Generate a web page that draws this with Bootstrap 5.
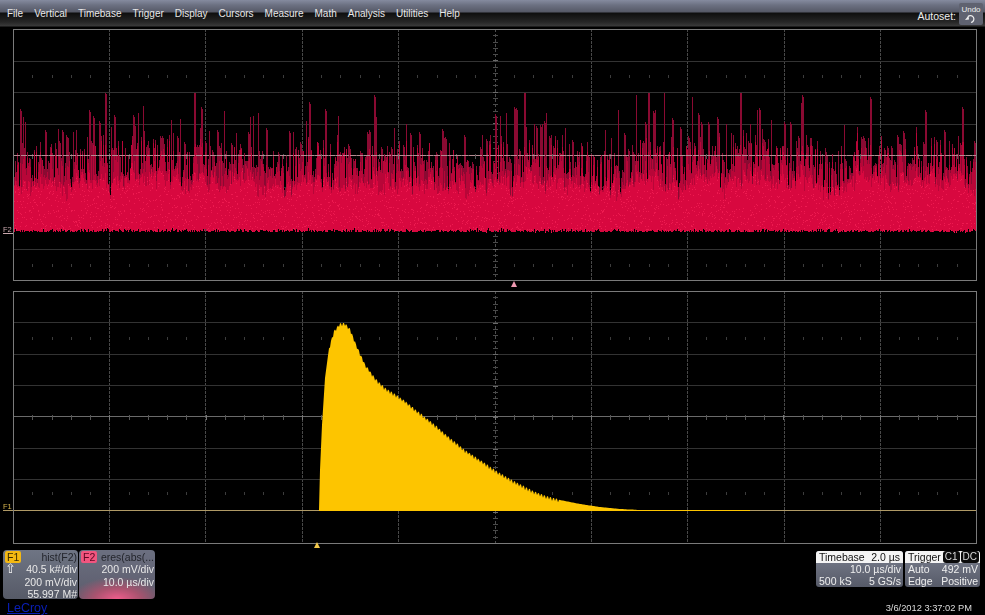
<!DOCTYPE html>
<html lang="en">
<head>
<meta charset="utf-8">
<title>Oscilloscope</title>
<link href="https://cdn.jsdelivr.net/npm/bootstrap@5.3.0/dist/css/bootstrap.min.css" rel="stylesheet">
<style>
html,body{height:615px;overflow:hidden;background:#000;font-family:"Liberation Sans",Arial,sans-serif;}
.scope-shell{width:985px;height:615px;color:#e8e8e8;font-size:10.5px;line-height:12px;filter:blur(.35px);}
.menu-strip{height:27px;padding:8px 2px 0 7px;background:linear-gradient(#858b9f 0,#6c7182 5px,#555866 12px,#0e0e0e 13px,#262626 22px,#3a3a3a 26px,#000 27px);}
.menu-item{color:#e8e8e8;font-size:10px;line-height:12px;}
.menu-list{gap:11px;}
.autoset{color:#eee;margin-top:2px;margin-right:3px;}
.undo-btn{width:24px;height:22px;margin-top:-5px;background:#5f6270;color:#eee;font-size:8px;line-height:9px;text-align:center;padding-top:2px;border-radius:2px;}
.undo-btn svg{display:block;margin:0 auto;}
.scope-canvas{display:block;width:985px;height:523px;}
.trace-row{height:49px;padding:0 5px 0 3px;}
.desc{border-radius:4px;font-size:10.5px;line-height:12.3px;height:49px;overflow:hidden;padding:1px 1px 0 2px;text-align:right;white-space:nowrap;}
.desc-f1{width:75px;background:linear-gradient(#6f7584,#565a67);}
.desc-f2{width:76px;margin-left:1px;background:radial-gradient(ellipse 46px 22px at 50% 100%,#ef5d8c 0,#a9536f 50%,transparent 100%),linear-gradient(#6b6f80,#5c5c6c);}
.chip{border-radius:2px;font-size:10.5px;line-height:12px;padding:0 2px;height:12px;color:#3a2a00;}
.chip-f1{background:#f4b912;}
.chip-f2{background:#f2557f;color:#5c0722;}
.desc-title{color:#23252c;}
.up-arrow{font-size:13px;line-height:12px;color:#f2f2f2;}
.tb-box{height:36px;border-radius:3px;overflow:hidden;background:linear-gradient(#7a7f8e,#565a68);margin-top:1px;line-height:12px;white-space:nowrap;}
.tb-time{width:87px;}
.tb-trig{width:75px;margin-left:2px;}
.tb-head{background:#f4f4f4;color:#111;padding:0 3px;height:12px;}
.tb-line{padding:0 2px 0 3px;height:12px;color:#eee;}
.ch-pills{margin-right:-2px;gap:1px;}
.ch-pill{background:#0b0b0b;color:#d8d8d8;padding:0 2px;font-size:10px;line-height:12px;border-radius:3px;}
.status-row{height:16px;padding:2px 13px 0 7px;}
.brand{color:#0a1fb8;font-size:12.5px;line-height:15px;text-decoration:underline;}
.stamp{color:#dcdcdc;font-size:9.3px;line-height:12px;padding-top:1px;}
</style>
</head>
<body>
<div class="scope-shell d-flex flex-column">
  <div class="menu-strip d-flex justify-content-between">
    <div class="menu-list d-flex">
      <span class="menu-item">File</span><span class="menu-item">Vertical</span><span class="menu-item">Timebase</span><span class="menu-item">Trigger</span><span class="menu-item">Display</span><span class="menu-item">Cursors</span><span class="menu-item">Measure</span><span class="menu-item">Math</span><span class="menu-item">Analysis</span><span class="menu-item">Utilities</span><span class="menu-item">Help</span>
    </div>
    <div class="d-flex">
      <span class="autoset">Autoset:</span>
      <div class="undo-btn">Undo
        <svg width="14" height="10" viewBox="0 0 14 10" fill="none" stroke="#eee" stroke-width="1.2"><path d="M4 2.5 A3.5 3.5 0 1 1 7 8.5"/><path d="M1 6 L4.5 1.5 L5 5.5 Z" fill="#eee" stroke="none"/></svg>
      </div>
    </div>
  </div>

  <svg id="scope" class="scope-canvas" viewBox="0 27 985 523" xmlns="http://www.w3.org/2000/svg" shape-rendering="crispEdges">
    <g id="grid"></g>
    <path id="redDark" fill="none" stroke="#8a0a32" stroke-width="1"/>
    <path id="redMid" fill="none" stroke="#b80638" stroke-width="1"/>
    <path id="redBright" fill="none" stroke="#d8083f" stroke-width="1"/>
    <path id="redSpeck" fill="none" stroke="#ee1a50" stroke-width="1"/>
    <line x1="14" x2="976" y1="155.5" y2="155.5" stroke="#b58a92" stroke-width="1" stroke-dasharray="6 1"/>
    <path id="yellow" fill="#fdc500" shape-rendering="auto"/>
    <line x1="14" x2="976" y1="510.5" y2="510.5" stroke="#b09a66" stroke-width="1"/>
    <line x1="319" x2="750" y1="510.5" y2="510.5" stroke="#fdc500" stroke-width="1"/>
    <text x="3" y="232" fill="#c9a7ad" font-size="7.5" font-family="Liberation Sans, sans-serif">F2</text>
    <line x1="3" x2="13" y1="233.5" y2="233.5" stroke="#c9a7ad"/>
    <text x="3" y="509" fill="#d6b44e" font-size="7.5" font-family="Liberation Sans, sans-serif">F1</text>
    <line x1="3" x2="13" y1="510.5" y2="510.5" stroke="#b09a66"/>
    <path d="M511 287 L514 281 L517 287 Z" fill="#f09ab2" shape-rendering="auto"/>
    <path d="M314 548 L317 542 L320 548 Z" fill="#f2c84a" shape-rendering="auto"/>
  </svg>

  <div class="trace-row d-flex justify-content-between">
    <div class="d-flex">
      <div class="desc desc-f1">
        <div class="d-flex justify-content-between"><span class="chip chip-f1">F1</span><span class="desc-title">hist(F2)</span></div>
        <div class="d-flex justify-content-between"><span class="up-arrow">&#8679;</span><span>40.5 k#/div</span></div>
        <div>200 mV/div</div>
        <div>55.997 M#</div>
      </div>
      <div class="desc desc-f2">
        <div class="d-flex justify-content-between"><span class="chip chip-f2">F2</span><span class="desc-title">eres(abs(...</span></div>
        <div>200 mV/div</div>
        <div>10.0 µs/div</div>
      </div>
    </div>
    <div class="d-flex">
      <div class="tb-box tb-time">
        <div class="tb-head d-flex justify-content-between"><span>Timebase</span><span>2.0 µs</span></div>
        <div class="tb-line text-end">10.0 µs/div</div>
        <div class="tb-line d-flex justify-content-between"><span>500 kS</span><span>5 GS/s</span></div>
      </div>
      <div class="tb-box tb-trig">
        <div class="tb-head d-flex justify-content-between"><span>Trigger</span><span class="ch-pills d-flex"><span class="ch-pill">C1</span><span class="ch-pill">DC</span></span></div>
        <div class="tb-line d-flex justify-content-between"><span>Auto</span><span>492 mV</span></div>
        <div class="tb-line d-flex justify-content-between"><span>Edge</span><span>Positive</span></div>
      </div>
    </div>
  </div>

  <div class="status-row d-flex justify-content-between">
    <span class="brand">LeCroy</span>
    <span class="stamp">3/6/2012 3:37:02 PM</span>
  </div>
</div>
<script src="https://cdn.jsdelivr.net/npm/bootstrap@5.3.0/dist/js/bootstrap.bundle.min.js"></script>
<script>
(function(){
  var seed=12345;
  function r(){seed=(seed*16807)%2147483647;return seed/2147483647;}
  var vx=[109,205,302,398,495,591,687,784,880];
  var panels=[{t:29,b:280,h:[61,92,124,155,187,218,249],dots:[76,265]},{t:291,b:543,h:[322,354,385,416,448,479,510],dots:[338,493]}];
  var g='';
  function ln(x1,y1,x2,y2,c,d){return '<line x1="'+x1+'" y1="'+y1+'" x2="'+x2+'" y2="'+y2+'" stroke="'+c+'" stroke-width="1"'+(d?' stroke-dasharray="'+d+'"':'')+'/>';}
  panels.forEach(function(p){
    vx.forEach(function(x){
      if(x!==495) g+=ln(x+.5,p.t,x+.5,p.b,'#484848','3 1');
    });
    p.h.forEach(function(y,i){
      if(i!==3) g+=ln(14,y+.5,976,y+.5,'#333');
    });
    p.dots.forEach(function(y){
      for(var q=1;q<50;q++){ if(q%5){var dx=Math.round(13+963*q/50)+.5;g+=ln(dx,y-1,dx,y+2,'#3c3c3c');} }
    });
    g+=ln(495.5,p.t,495.5,p.b,'#4c4c4c','3 2');
    for(var i=0;i<=40;i++){var y=Math.round(p.t+(p.b-p.t)*i/40)+.5;g+=ln(493,y,498,y,i%5?'#4a4a4a':'#6a6a6a');}
    var cy=p.h[3]+.5;
    g+=ln(14,cy,976,cy,'#6a6a6a');
    for(var j=0;j<=50;j++){var x=Math.round(13+963*j/50)+.5;g+=ln(x,cy-2,x,cy+3,j%5?'#555':'#777');}
    g+='<rect x="13.5" y="'+(p.t+.5)+'" width="963" height="'+(p.b-p.t)+'" fill="none" stroke="#7a7a7a"/>';
  });
  document.getElementById('grid').innerHTML=g;

  /* red noise trace */
  var dk='',md='',br='',sp='',base=232;
  var slow=0,lobe=0,hold=0,last=200;
  for(var x=14;x<976;x++){
    slow=slow*.7+(r()-.5)*9;
    lobe=lobe*.93+(r()-.5)*2.5;
    var b=base-Math.round(r()*r()*4);
    var top=Math.round(190+slow*1.3+lobe*1.5-r()*14);
    var midTop=top-Math.round(Math.pow(r(),1.4)*36);
    var spike=midTop-Math.round(r()*10);
    if(hold>0){spike=last+2;hold--;}
    else if(r()<.3){spike=midTop-Math.round(10+Math.pow(r(),2)*55);hold=r()<.5?1:0;last=spike;}
    if(spike<93)spike=93;
    var tx=x+.5;
    dk+='M'+tx+' '+b+'V'+spike;
    md+='M'+tx+' '+b+'V'+midTop;
    br+='M'+tx+' '+b+'V'+top;
    for(var n=0;n<3;n++){
      var s=Math.round(top+r()*(b-top));
      sp+='M'+tx+' '+s+'v1';
    }
  }
  document.getElementById('redDark').setAttribute('d',dk);
  document.getElementById('redMid').setAttribute('d',md);
  document.getElementById('redBright').setAttribute('d',br);
  document.getElementById('redSpeck').setAttribute('d',sp);

  /* yellow histogram envelope */
  var pts=[[319,510],[320,470],[322,425],[325,378],[329,348],[334,331],[339,324],[345,323],[350,329],[356,344],[365,364],[375,378],[385,388],[395,394],[405,401],[420,413],[435,425],[450,438],[465,450],[480,460],[495,470],[510,479],[525,487],[540,494],[560,500],[580,504],[600,507],[620,509],[640,510]];
  var d='M319 511',k=0;
  for(var px=319;px<=640;px+=1){
    while(k<pts.length-2&&pts[k+1][0]<px)k++;
    var a=pts[k],c=pts[k+1],t=(px-a[0])/(c[0]-a[0]);
    var yy=a[1]+(c[1]-a[1])*t;
    if(yy<500&&px>328)yy+=(px%3===0?2.5:-.5)+r()*.8;
    d+='L'+px+' '+yy.toFixed(1);
  }
  d+='L640 511Z';
  document.getElementById('yellow').setAttribute('d',d);
})();
</script>
</body>
</html>
